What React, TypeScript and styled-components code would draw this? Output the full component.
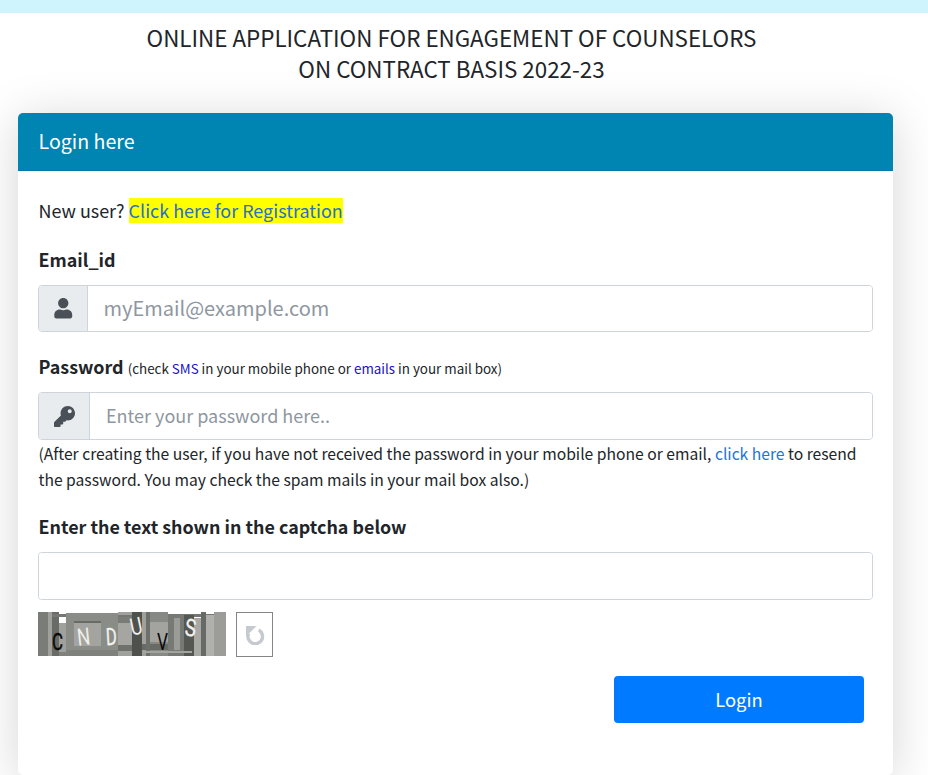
import React from "react";
import styled, { createGlobalStyle } from "styled-components";
import { FaUser, FaKey } from "react-icons/fa";

const Global = createGlobalStyle`
  html, body { margin: 0; padding: 0; background: #fff; height: 100%; overflow: hidden; }
  body { font-family: "Noto Sans CJK SC", "Noto Sans", sans-serif; color: #212529; }
`;

const TopBar = styled.div`height: 13px; background: #cff4fe;`;
const Page = styled.div`padding: 0 35px 0 18px;`;
const Title = styled.h1`
  margin: 0;
  padding: 9px 8px 0 0;
  height: 100px;
  box-sizing: border-box;
  text-align: center;
  font-size: 22.4px;
  font-weight: 400;
  line-height: 30.5px;
`;
const Card = styled.section`
  background: #fff;
  border-radius: 5px;
  height: 662px;
  box-shadow: 0 6px 48px rgba(0, 0, 0, 0.17);
`;
const CardHeader = styled.header`
  height: 58px;
  box-sizing: border-box;
  background: #0085b2;
  border-radius: 5px 5px 0 0;
  border-bottom: 1px solid #007ba5;
  color: #fff;
  font-size: 19.6px;
  line-height: 56px;
  padding-left: 20.5px;
`;
const CardBody = styled.div`padding: 26px 20px 0 20px;`;
const Line = styled.p`margin: 0 0 0 0.5px; font-size: 17.95px; line-height: 26px;`;
const Highlight = styled.a`
  display: inline-block;
  height: 25px;
  line-height: 25px;
  vertical-align: top;
  margin-top: 1px;
  background: #ffff00;
  color: #2a6fc9;
  text-decoration: none;
`;
const Label = styled.label<{ $top: number }>`
  display: block;
  margin: ${(p) => p.$top}px 0 0 0.5px;
  font-size: 17.9px;
  font-weight: 700;
  line-height: 26px;
`;
const Small = styled.span`font-size: 13.4px; font-weight: 400;`;
const SmsLink = styled.a`color: #2010c8; text-decoration: none;`;
const Group = styled.div<{ $top: number; $h: number }>`
  display: flex;
  height: ${(p) => p.$h}px;
  margin-top: ${(p) => p.$top}px;
  box-sizing: border-box;
  border: 1px solid #ced4da;
  border-radius: 4px;
  overflow: hidden;
`;
const Addon = styled.div<{ $w: number }>`
  width: ${(p) => p.$w}px;
  flex: none;
  display: flex;
  align-items: center;
  justify-content: center;
  background: #e9ecef;
  border-right: 1px solid #ced4da;
  box-sizing: border-box;
  color: #495057;
`;
const Field = styled.input<{ $size: number; $pad: number }>`
  flex: 1;
  min-width: 0;
  border: 0;
  outline: 0;
  font-family: inherit;
  font-size: ${(p) => p.$size}px;
  padding: 0 ${(p) => p.$pad}px 2px;
  color: #495057;
  &::placeholder { color: #8e979f; opacity: 1; }
`;
const Note = styled.p`margin: 1px 0 0 0.5px; font-size: 15.66px; line-height: 26px;`;
const BlueLink = styled.a`color: #1f74d4; text-decoration: none;`;
const CaptchaRow = styled.div`display: flex; align-items: flex-start; gap: 10px; margin-top: 12px;`;
const Refresh = styled.button`
  width: 37px;
  height: 45px;
  padding: 0;
  background: #fff;
  border: 1px solid #858585;
  display: flex;
  align-items: center;
  justify-content: center;
`;
const Actions = styled.div`display: flex; justify-content: flex-end; padding-right: 9px; margin-top: 19px;`;
const LoginButton = styled.button`
  width: 250px;
  height: 47px;
  padding: 0 0 2px;
  border: 0;
  border-radius: 4px;
  background: #007bff;
  color: #fff;
  font-family: inherit;
  font-size: 18.4px;
`;

const bands: [number, number, number, number, string][] = [
  [0, 0, 10, 44, "#7a7c77"],
  [10, 0, 4, 44, "#a0a19c"],
  [14, 0, 7, 44, "#696b66"],
  [21, 11, 7, 29, "#a0a19c"],
  [21, 40, 7, 4, "#7f817c"],
  [14, 2, 166, 3, "#757772"],
  [28, 1, 52, 37, "#8a8c87"],
  [28, 38, 52, 6, "#7f817c"],
  [36, 9, 27, 2, "#696b66"],
  [36, 11, 27, 23, "#a3a49f"],
  [80, 0, 14, 3, "#a0a19c"],
  [80, 5, 14, 6, "#7a7c77"],
  [80, 11, 14, 22, "#a5a6a2"],
  [80, 33, 14, 6, "#6f716c"],
  [80, 39, 14, 5, "#a0a19c"],
  [94, 0, 10, 44, "#4f514d"],
  [104, 0, 4, 44, "#a0a19c"],
  [112, 0, 18, 44, "#878984"],
  [112, 10, 18, 20, "#a3a49f"],
  [104, 32, 26, 6, "#686a65"],
  [108, 0, 4, 44, "#6d6f6a"],
  [130, 3, 26, 41, "#777974"],
  [136, 6, 6, 32, "#9a9c97"],
  [146, 3, 10, 41, "#555752"],
  [156, 6, 7, 38, "#a8a9a5"],
  [163, 0, 5, 44, "#686a65"],
  [168, 3, 8, 41, "#b0b1ad"],
  [176, 0, 12, 44, "#9c9d99"],
  [104, 39, 50, 2, "#a3a49f"],
];

const Captcha = () => (
  <svg width="188" height="44" viewBox="0 0 188 44" style={{ display: "block" }}>
    {bands.map(([x, y, w, h, c]) => (
      <rect key={`${x}-${y}-${w}`} x={x} y={y} width={w} height={h} fill={c} />
    ))}
    <g fontFamily="Roboto, sans-serif" fontSize="24" fontWeight="400">
      <text x="14" y="38" fill="#0a0a0a" stroke="#0a0a0a" strokeWidth="0.5" textLength="11" lengthAdjust="spacingAndGlyphs">C</text>
      <text x="39" y="33" fill="#eeeeea" textLength="13" lengthAdjust="spacingAndGlyphs" transform="rotate(-6 46 24)">N</text>
      <text x="68" y="33" fill="#f2f2ee" stroke="#f2f2ee" strokeWidth="0.3" textLength="11" lengthAdjust="spacingAndGlyphs" transform="rotate(-3 74 26)">D</text>
      <text x="92" y="23" fill="#f0f0ec" textLength="12" lengthAdjust="spacingAndGlyphs" transform="rotate(-12 97 14)">U</text>
      <text x="119" y="38" fill="#0a0a0a" textLength="11" lengthAdjust="spacingAndGlyphs">V</text>
      <text x="147" y="24" fill="#f2f2ee" stroke="#f2f2ee" strokeWidth="0.4" textLength="11" lengthAdjust="spacingAndGlyphs" transform="rotate(6 152 16)">S</text>
    </g>
  </svg>
);

const RefreshIcon = () => (
  <svg width="20" height="20" viewBox="0 0 20 20" fill="none">
    <path d="M13.800 5.100A7.300 7.300 0 1 1 3.600 8.400" stroke="#c6cacf" strokeWidth="3.400" />
    <path d="M1 1h10.500L1 11.500z" fill="#c6cacf" />
  </svg>
);

export default function App() {
  return (
    <>
      <Global />
      <TopBar />
      <Page>
        <Title>
          ONLINE APPLICATION FOR ENGAGEMENT OF COUNSELORS
          <br />
          ON CONTRACT BASIS 2022-23
        </Title>
        <Card>
          <CardHeader>Login here</CardHeader>
          <CardBody>
            <Line>
              New user? <Highlight href="#">Click here for Registration</Highlight>
            </Line>
            <Label $top={23}>Email_id</Label>
            <Group $top={13} $h={47}>
              <Addon $w={49}><FaUser size={20.5} /></Addon>
              <Field $size={20} $pad={15.5} placeholder="myEmail@example.com" />
            </Group>
            <Label $top={21}>
              Password{" "}
              <Small>
                (check <SmsLink href="#">SMS</SmsLink> in your mobile phone or{" "}
                <SmsLink href="#">emails</SmsLink> in your mail box)
              </Small>
            </Label>
            <Group $top={11} $h={48}>
              <Addon $w={51}><FaKey size={21} /></Addon>
              <Field $size={18} $pad={16} placeholder="Enter your password here.." />
            </Group>
            <Note>
              (After creating the user, if you have not received the password in your mobile phone or email,{" "}
              <BlueLink href="#">click here</BlueLink> to resend the password. You may check the spam mails in your mail box also.)
            </Note>
            <Label $top={20}>Enter the text shown in the captcha below</Label>
            <Group $top={13} $h={48}>
              <Field $size={18} $pad={16} />
            </Group>
            <CaptchaRow>
              <Captcha />
              <Refresh aria-label="refresh"><RefreshIcon /></Refresh>
            </CaptchaRow>
            <Actions>
              <LoginButton>Login</LoginButton>
            </Actions>
          </CardBody>
        </Card>
      </Page>
    </>
  );
}
